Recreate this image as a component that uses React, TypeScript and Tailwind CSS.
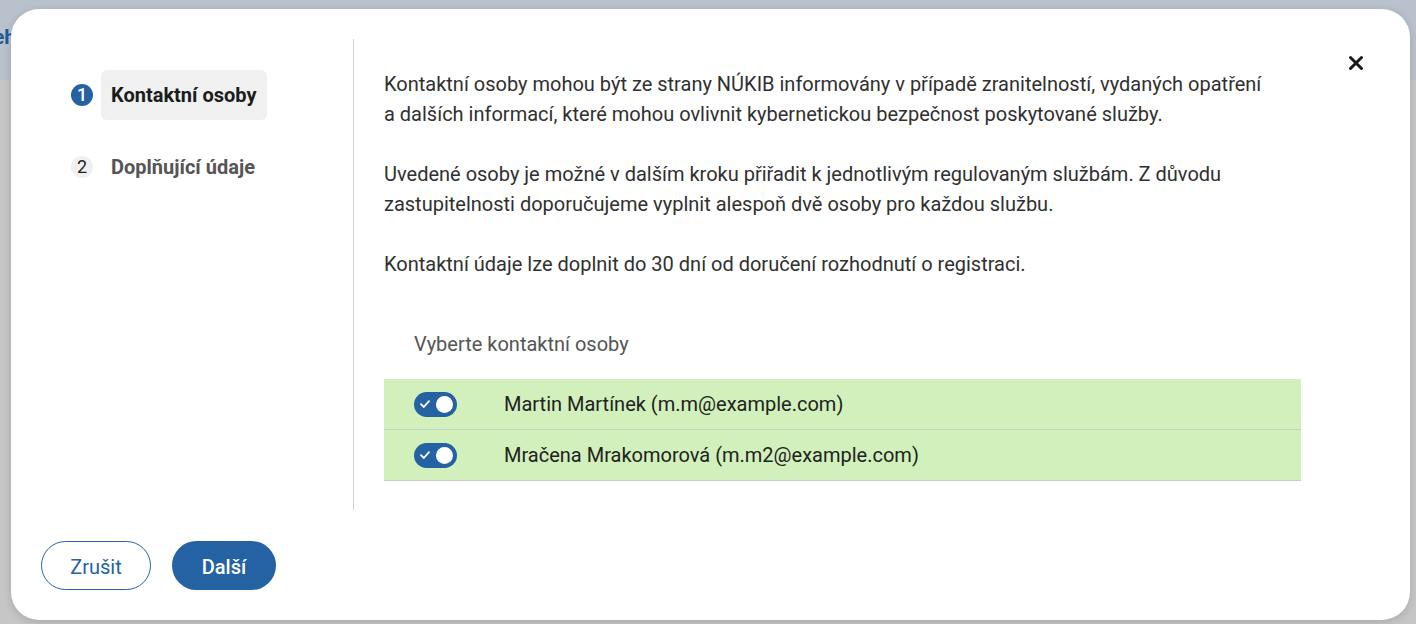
import React from 'react';

const font = { fontFamily: 'Roboto, "Noto Sans", sans-serif' };

interface Contact {
  name: string;
  email: string;
}

const contacts: Contact[] = [
  { name: 'Martin Martínek', email: 'm.m@example.com' },
  { name: 'Mračena Mrakomorová', email: 'm.m2@example.com' },
];

const Toggle: React.FC = () => (
  <div className="relative w-[43px] h-[25px] rounded-full bg-[#2462a3] flex items-center justify-between pl-[6px] pr-[4px]">
    <svg width="10" height="8" viewBox="0 0 10 8" fill="none">
      <path d="M1 4.2 L3.8 7 L9 1.2" stroke="white" strokeWidth="1.8" strokeLinecap="round" strokeLinejoin="round" />
    </svg>
    <div className="w-[17px] h-[17px] rounded-full bg-white" />
  </div>
);

const CloseIcon: React.FC = () => (
  <svg width="16" height="16" viewBox="0 0 16 16" fill="none">
    <path d="M2.5 2.5 L13.5 13.5 M13.5 2.5 L2.5 13.5" stroke="#1a1a1a" strokeWidth="3" strokeLinecap="round" />
  </svg>
);

export default function App() {
  return (
    <div className="relative w-[1416px] h-[624px] overflow-hidden bg-[#c6c6c6]" style={font}>
      <div className="h-[80px] bg-[#b9c1cc] flex items-center">
        <span className="ml-[-7px] text-[21px] font-bold text-[#24599a] mt-[-4px]">eh</span>
      </div>

      {/* dialog */}
      <div className="absolute left-[11px] top-[9px] w-[1399px] h-[611px] bg-white rounded-[28px] shadow-[0_2px_8px_rgba(0,0,0,0.15)] flex flex-col">
        <button className="absolute right-[46px] top-[46px] w-[16px] h-[16px] flex items-center justify-center">
          <CloseIcon />
        </button>

        <div className="flex mt-[30px] h-[471px]">
          {/* steps */}
          <div className="w-[343px] border-r border-[#cfcfcf] pl-[60px] pt-[31px] flex flex-col gap-[22px]">
            <div className="flex items-center gap-[8px]">
              <div className="w-[22px] h-[22px] rounded-full bg-[#2462a3] text-white text-[18px] font-medium flex items-center justify-center leading-none">
                1
              </div>
              <div className="h-[50px] px-[10px] rounded-[6px] bg-[#f0f0f0] flex items-center text-[20px] font-bold text-[#1c1c1c]">
                Kontaktní osoby
              </div>
            </div>
            <div className="flex items-center gap-[8px]">
              <div className="w-[22px] h-[22px] rounded-full bg-[#f0f0f0] text-[#222] text-[18px] flex items-center justify-center leading-none">
                2
              </div>
              <div className="h-[50px] px-[10px] flex items-center text-[20px] font-bold text-[#555]">
                Doplňující údaje
              </div>
            </div>
          </div>

          {/* content */}
          <div className="flex-1 pl-[30px] pr-[109px] pt-[30px] text-[20px] leading-[30px] text-[#303030]">
            <p className="max-w-[884px] mb-[30px]">
              Kontaktní osoby mohou být ze strany NÚKIB informovány v případě zranitelností, vydaných opatření a dalších
              informací, které mohou ovlivnit kybernetickou bezpečnost poskytované služby.
            </p>
            <p className="max-w-[884px] mb-[30px]">
              Uvedené osoby je možné v dalším kroku přiřadit k jednotlivým regulovaným službám. Z důvodu zastupitelnosti
              doporučujeme vyplnit alespoň dvě osoby pro každou službu.
            </p>
            <p className="max-w-[884px]">Kontaktní údaje lze doplnit do 30 dní od doručení rozhodnutí o registraci.</p>

            <div className="mt-[50px] pl-[30px] text-[#555]">Vyberte kontaktní osoby</div>

            <div className="mt-[20px]">
              {contacts.map((c) => (
                <div
                  key={c.email}
                  className="h-[51px] bg-[#d1f0bb] border-b border-[#c4cfc0] flex items-center pl-[30px]"
                >
                  <Toggle />
                  <span className="ml-[47px] text-[#222]">
                    {c.name} ({c.email})
                  </span>
                </div>
              ))}
            </div>
          </div>
        </div>

        {/* footer */}
        <div className="flex gap-[21px] pl-[30px] mt-[31px]">
          <button className="w-[110px] h-[49px] pt-[2px] rounded-full border border-[#2462a3] text-[#2462a3] text-[20px]">
            Zrušit
          </button>
          <button className="w-[104px] h-[49px] pt-[2px] rounded-full bg-[#2462a3] text-white text-[20px] font-medium">
            Další
          </button>
        </div>
      </div>
    </div>
  );
}
